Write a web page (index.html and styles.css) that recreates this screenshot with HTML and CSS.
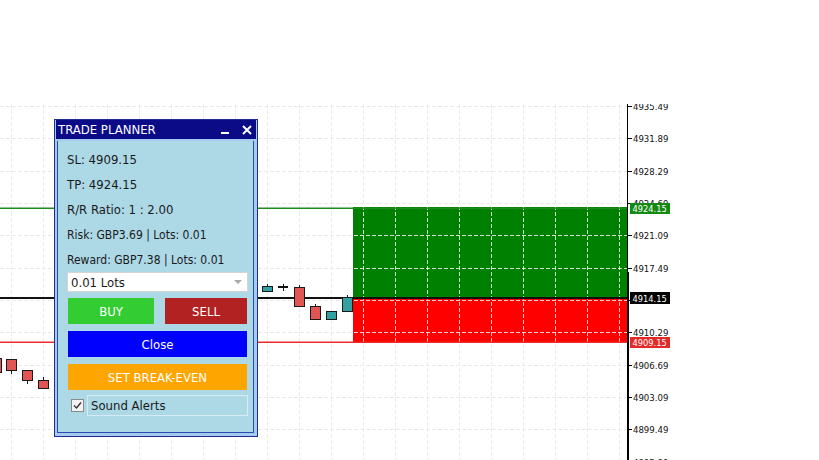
FILE: index.html
```
<!DOCTYPE html>
<html>
<head>
<meta charset="utf-8">
<title>Trade Planner</title>
<link rel="stylesheet" href="styles.css">
</head>
<body>
<div class="stage">
  <svg class="chart" width="819" height="460" viewBox="0 0 819 460">
    <defs>
      <clipPath id="plot"><rect x="0" y="104" width="627" height="356"/></clipPath>
      <clipPath id="zones"><rect x="353" y="207" width="274" height="136"/></clipPath>
      <clipPath id="axis"><rect x="628" y="104" width="191" height="356"/></clipPath>
      <path id="gridlines" d="M11.5 104V460M43.5 104V460M75.5 104V460M107.5 104V460M139.5 104V460M171.5 104V460M203.5 104V460M235.5 104V460M267.5 104V460M299.5 104V460M331.5 104V460M363.5 104V460M395.5 104V460M427.5 104V460M459.5 104V460M491.5 104V460M523.5 104V460M555.5 104V460M587.5 104V460M619.5 104V460M0 106.5H627M0 138.5H627M0 171.5H627M0 203.5H627M0 235.5H627M0 268.5H627M0 300.5H627M0 332.5H627M0 365.5H627M0 397.5H627M0 429.5H627"/>
    </defs>

    <use href="#gridlines" class="grid" clip-path="url(#plot)"/>

    <rect class="zone-tp" x="353" y="207" width="274" height="91"/>
    <rect class="zone-sl" x="353" y="298" width="274" height="45"/>
    <use href="#gridlines" class="grid-zone" clip-path="url(#zones)"/>

    <rect class="line-tp" x="0" y="207.5" width="627" height="1.5"/>
    <rect class="line-sl" x="0" y="341.5" width="627" height="1.5"/>
    <rect class="line-entry" x="0" y="297" width="627" height="2"/>

    <g class="candles">
      <path class="wick" d="M267.5 284V286.5M283.5 284V291M299.5 285V287.5M315.5 304V306.5M347.5 295V297.5M11.5 371V374M27.5 381V384M43.5 377V380.5"/>
      <rect class="bull" x="262.5" y="286.5" width="10" height="5"/>
      <rect class="doji" x="278" y="286" width="10" height="2"/>
      <rect class="bear" x="294.5" y="287.5" width="10" height="19"/>
      <rect class="bear" x="310.5" y="306.5" width="10" height="13"/>
      <rect class="bull" x="326.5" y="311.5" width="10" height="8"/>
      <rect class="bull" x="342.5" y="297.5" width="10" height="14"/>
      <rect class="bear" x="-8.5" y="358.5" width="10" height="14"/>
      <rect class="bear" x="6.5" y="359.5" width="10" height="11"/>
      <rect class="bear" x="22.5" y="370.5" width="10" height="10"/>
      <rect class="bear" x="38.5" y="380.5" width="10" height="8"/>
    </g>

    <path class="axis-line" d="M627.5 104V460"/>
    <path class="axis-line" d="M628.5 272V460"/>
    <path class="axis-line" d="M627 106.5H632M627 138.5H632M627 171.5H632M627 203.5H632M627 235.5H632M627 268.5H632M627 300.5H632M627 332.5H632M627 365.5H632M627 397.5H632M627 429.5H632"/>

    <g clip-path="url(#axis)">
      <text class="ax" x="633" y="109.5">4935.49</text>
      <text class="ax" x="633" y="142">4931.89</text>
      <text class="ax" x="633" y="174.5">4928.29</text>
      <text class="ax" x="633" y="206.5">4924.69</text>
      <text class="ax" x="633" y="239">4921.09</text>
      <text class="ax" x="633" y="271.5">4917.49</text>
      <text class="ax" x="633" y="336">4910.29</text>
      <text class="ax" x="633" y="368.5">4906.69</text>
      <text class="ax" x="633" y="400.5">4903.09</text>
      <text class="ax" x="633" y="433">4899.49</text>
      <text class="ax" x="633" y="465.5">4895.89</text>
    </g>

    <rect class="tag-tp" x="630" y="203" width="40" height="11"/>
    <text class="ax tag-text" x="632.5" y="212">4924.15</text>
    <rect class="tag-entry" x="630" y="292" width="40" height="12"/>
    <text class="ax tag-text" x="632.5" y="301.5">4914.15</text>
    <rect class="tag-sl" x="630" y="337" width="40" height="11"/>
    <text class="ax tag-text" x="632.5" y="346">4909.15</text>
  </svg>

  <div class="window">
    <div class="titlebar">
      <span class="title">TRADE PLANNER</span>
      <svg class="win-controls" width="34" height="19" viewBox="0 0 34 19">
        <path d="M2 13H10" />
        <path d="M24 6L32 14M32 6L24 14" />
      </svg>
    </div>
    <div class="panel">
      <div class="row">SL: 4909.15</div>
      <div class="row">TP: 4924.15</div>
      <div class="row">R/R Ratio: 1 : 2.00</div>
      <div class="row small">Risk: GBP3.69 | Lots: 0.01</div>
      <div class="row small">Reward: GBP7.38 | Lots: 0.01</div>
      <div class="lots">
        <span>0.01 Lots</span>
        <span class="caret"></span>
      </div>
      <div class="btn-row">
        <div class="btn buy">BUY</div>
        <div class="btn sell">SELL</div>
      </div>
      <div class="btn close">Close</div>
      <div class="btn breakeven">SET BREAK-EVEN</div>
      <div class="check-row">
        <span class="checkbox">
          <svg width="11" height="11" viewBox="0 0 11 11"><path d="M2 5.5L4.5 8L9 2.5"/></svg>
        </span>
        <span class="check-label">Sound Alerts</span>
      </div>
    </div>
  </div>
</div>
</body>
</html>
```

FILE: styles.css
```
html, body {
  margin: 0;
  padding: 0;
  background: #ffffff;
}

.stage {
  position: relative;
  width: 819px;
  height: 460px;
  overflow: hidden;
  font-family: "DejaVu Sans Condensed", "DejaVu Sans", sans-serif;
  font-stretch: condensed;
}

.chart {
  display: block;
}

.grid {
  fill: none;
  stroke: #ebebeb;
  stroke-width: 1;
  stroke-dasharray: 4 2;
}

.grid-zone {
  fill: none;
  stroke: rgba(255, 255, 255, 0.8);
  stroke-width: 1;
  stroke-dasharray: 4 2;
}

.zone-tp { fill: #008000; }
.zone-sl { fill: #ff0000; }
.line-tp { fill: #1f8a1f; }
.line-sl { fill: #f02a2a; }
.line-entry { fill: #111111; }

.wick {
  fill: none;
  stroke: #1a1a1a;
  stroke-width: 1;
}

.bull {
  fill: #35a0a0;
  stroke: #1a1a1a;
  stroke-width: 1;
}

.bear {
  fill: #e25555;
  stroke: #1a1a1a;
  stroke-width: 1;
}

.doji { fill: #111111; }

.axis-line {
  fill: none;
  stroke: #000000;
  stroke-width: 1;
}

.ax {
  font-family: "DejaVu Sans Condensed", "DejaVu Sans", sans-serif;
  font-stretch: condensed;
  font-size: 9.5px;
  fill: #111111;
}

.tag-tp { fill: #138a13; }
.tag-entry { fill: #000000; }
.tag-sl { fill: #e32828; }
.ax.tag-text {
  fill: #ffffff;
  font-size: 9.2px;
}

/* floating window */
.window {
  position: absolute;
  left: 54px;
  top: 119px;
  width: 204px;
  height: 318px;
  box-sizing: border-box;
  border: 1px solid #1f2f8f;
  background: #a5cbf0;
  padding: 0 3px 3px 2px;
  display: flex;
  flex-direction: column;
}

.titlebar {
  height: 19px;
  flex: none;
  margin: 0 -2px 0 -1px;
  padding: 0 3px 0 2px;
  background: #0b0b88;
  color: #ffffff;
  font-size: 13px;
  display: flex;
  align-items: center;
}

.title {
  flex: 1;
  white-space: nowrap;
}

.win-controls {
  display: block;
  fill: none;
  stroke: #ffffff;
  stroke-width: 2;
}

.panel {
  flex: 1;
  margin-top: 2px;
  border: 1px solid #2a4bb0;
  border-top: 0;
  background: #add8e6;
  padding: 6px 5px 0 9px;
  display: flex;
  flex-direction: column;
  color: #1a1a1a;
  font-size: 13px;
}

.row {
  height: 25px;
  display: flex;
  align-items: center;
  white-space: nowrap;
}

.row.small {
  font-size: 12px;
}

.lots {
  height: 20px;
  box-sizing: border-box;
  border: 1px solid #d4d4d4;
  background: #ffffff;
  padding: 0 5px 0 3px;
  display: flex;
  align-items: center;
  justify-content: space-between;
  color: #1a1a1a;
}

.caret {
  width: 0;
  height: 0;
  border-left: 4px solid transparent;
  border-right: 4px solid transparent;
  border-top: 4px solid #a8a8a8;
}

.btn-row {
  margin: 6px 1px 0 1px;
  display: flex;
  justify-content: space-between;
}

.btn {
  height: 26px;
  display: flex;
  align-items: center;
  justify-content: center;
  color: #ffffff;
  font-size: 13px;
}

.buy {
  width: 86px;
  background: #33cc33;
}

.sell {
  width: 82px;
  background: #b22222;
}

.close {
  margin: 7px 1px 0 1px;
  background: #0000ff;
}

.breakeven {
  margin: 7px 1px 0 1px;
  background: #ffa500;
}

.check-row {
  margin-top: 5px;
  display: flex;
  align-items: center;
}

.checkbox {
  width: 13px;
  height: 13px;
  box-sizing: border-box;
  margin-left: 4px;
  border: 1px solid #8a8a8a;
  background: #f2f4f6;
  display: flex;
  align-items: center;
  justify-content: center;
}

.checkbox svg {
  display: block;
  fill: none;
  stroke: #333333;
  stroke-width: 1.4;
}

.check-label {
  flex: 1;
  height: 21px;
  box-sizing: border-box;
  margin-left: 3px;
  border: 1px solid #d6ebf3;
  padding-left: 3px;
  display: flex;
  align-items: center;
  white-space: nowrap;
}
```
